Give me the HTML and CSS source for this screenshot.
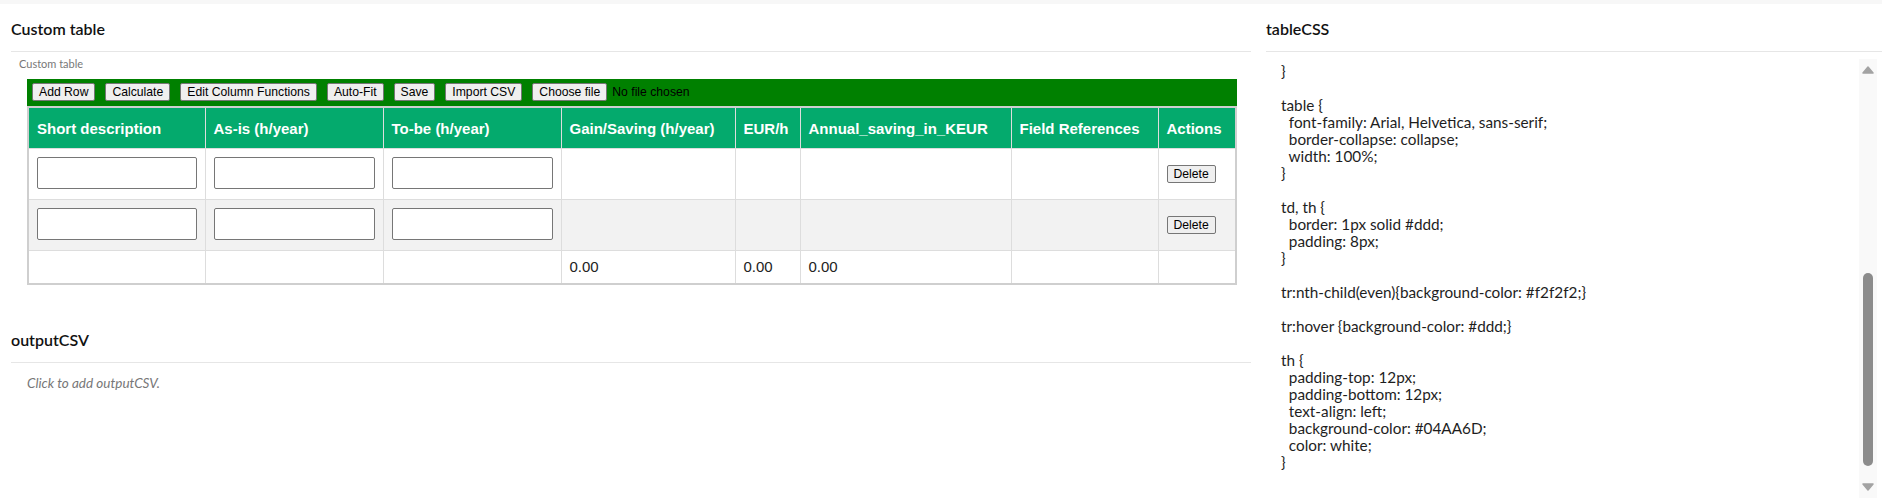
FILE: index.html
```html
<!DOCTYPE html>
<html lang="en">
<head>
    <meta charset="UTF-8">
    <meta name="viewport" content="width=device-width, initial-scale=1.0">
    <title>Custom table</title>
    <link rel="stylesheet" href="styles.css">
</head>
<body>
<div class="page">
    <div class="main">
        <!-- custom table widget -->
        <section class="panel">
            <div class="panel-head"><h2>Custom table</h2></div>
            <div class="widget-label">Custom table</div>
            <div class="widget">
                <div class="toolbar">
                    <button class="btn">Add Row</button>
                    <button class="btn">Calculate</button>
                    <button class="btn">Edit Column Functions</button>
                    <button class="btn">Auto-Fit</button>
                    <button class="btn">Save</button>
                    <button class="btn">Import CSV</button>
                    <span class="file-pick">
                        <button class="btn">Choose file</button>
                        <span>No file chosen</span>
                    </span>
                </div>
                <table class="grid">
                    <colgroup>
                        <col class="c-desc"><col class="c-asis"><col class="c-tobe"><col class="c-gain">
                        <col class="c-eur"><col class="c-annual"><col class="c-ref"><col class="c-act">
                    </colgroup>
                    <thead>
                        <tr>
                            <th>Short description</th>
                            <th>As-is (h/year)</th>
                            <th>To-be (h/year)</th>
                            <th>Gain/Saving (h/year)</th>
                            <th>EUR/h</th>
                            <th>Annual_saving_in_KEUR</th>
                            <th>Field References</th>
                            <th>Actions</th>
                        </tr>
                    </thead>
                    <tbody>
                        <tr>
                            <td><input type="text"></td>
                            <td><input type="text"></td>
                            <td><input type="text"></td>
                            <td></td><td></td><td></td><td></td>
                            <td><button class="btn">Delete</button></td>
                        </tr>
                        <tr>
                            <td><input type="text"></td>
                            <td><input type="text"></td>
                            <td><input type="text"></td>
                            <td></td><td></td><td></td><td></td>
                            <td><button class="btn">Delete</button></td>
                        </tr>
                        <tr>
                            <td></td><td></td><td></td>
                            <td>0.00</td>
                            <td>0.00</td>
                            <td>0.00</td>
                            <td></td><td></td>
                        </tr>
                    </tbody>
                </table>
            </div>
        </section>

        <!-- output -->
        <section class="panel panel-output">
            <div class="panel-head"><h2>outputCSV</h2></div>
            <p class="placeholder">Click to add outputCSV.</p>
        </section>
    </div>

    <aside class="side">
        <div class="panel-head"><h2>tableCSS</h2></div>
        <div class="code-box">
<pre class="code">}

table {
  font-family: Arial, Helvetica, sans-serif;
  border-collapse: collapse;
  width: 100%;
}

td, th {
  border: 1px solid #ddd;
  padding: 8px;
}

tr:nth-child(even){background-color: #f2f2f2;}

tr:hover {background-color: #ddd;}

th {
  padding-top: 12px;
  padding-bottom: 12px;
  text-align: left;
  background-color: #04AA6D;
  color: white;
}</pre>
            <div class="scrollbar">
                <svg class="arrow" width="12" height="8" viewBox="0 0 12 8"><polygon points="1,7 6,1 11,7" fill="#a3a3a3" stroke="#a3a3a3" stroke-width="1.5" stroke-linejoin="round"/></svg>
                <div class="track"><div class="thumb"></div></div>
                <svg class="arrow" width="12" height="8" viewBox="0 0 12 8"><polygon points="1,1 6,7 11,1" fill="#a3a3a3" stroke="#a3a3a3" stroke-width="1.5" stroke-linejoin="round"/></svg>
            </div>
        </div>
    </aside>
</div>
</body>
</html>
```

FILE: styles.css
```css
:root {
    --head-line: #e6e6e6;
    --green-bar: #008000;
    --th-color: #04AA6D;
}
html, body {
    margin: 0;
    background: #fff;
    overflow: hidden;
}
body {
    font-family: Lato, "Open Sans", sans-serif;
    color: #111;
}
.page {
    display: grid;
    grid-template-columns: 1240px 1fr;
    column-gap: 15px;
    padding-left: 11px;
    border-top: 4px solid #f7f7f7;
    height: 498px;
}

/* panel headers */
.panel-head {
    height: 32px;
    padding-top: 15px;
    border-bottom: 1px solid var(--head-line);
}
.panel-head h2 {
    margin: 0;
    font-size: 16px;
    line-height: 20px;
    font-weight: 600;
    color: #111;
}

.widget-label {
    padding: 5px 0 0 8px;
    font-size: 11px;
    line-height: 14px;
    color: #777;
}
.widget {
    margin-top: 8px;
    padding: 0 14px 0 16px;
}

/* toolbar */
.toolbar {
    display: flex;
    align-items: center;
    gap: 10px;
    padding: 4px 5px 5px;
    background-color: var(--green-bar);
    font-family: "Liberation Sans", Arial, sans-serif;
    font-size: 12.2px;
}
.file-pick {
    display: flex;
    align-items: center;
    gap: 5px;
    color: #000;
}
.btn {
    height: 18px;
    padding: 0 6px;
    font-family: "Liberation Sans", Arial, sans-serif;
    font-size: 12.2px;
    line-height: 14px;
    color: #000;
    background-color: #efefef;
    border: 1px solid #767676;
    border-radius: 2px;
}

/* table */
.grid {
    width: 100%;
    table-layout: fixed;
    border-collapse: collapse;
    border: 2px solid #cfcfcf;
    font-family: "Liberation Sans", Arial, sans-serif;
    font-size: 15px;
    color: #222;
}
.c-desc { width: 177px; }
.c-asis { width: 178px; }
.c-tobe { width: 178px; }
.c-gain { width: 174px; }
.c-eur { width: 65px; }
.c-annual { width: 211px; }
.c-ref { width: 147px; }
.c-act { width: 78px; }
.grid th,
.grid td {
    border: 1px solid #ddd;
    padding: 8px;
    text-align: left;
    line-height: 16px;
    white-space: nowrap;
}
.grid th {
    padding-top: 13px;
    padding-bottom: 12px;
    line-height: 15px;
    background-color: var(--th-color);
    color: white;
}
.grid tbody tr:nth-child(even) {
    background-color: #f2f2f2;
}
.grid input {
    display: block;
    box-sizing: border-box;
    width: 100%;
    height: 32px;
    margin: 0 0 2px;
    border: 1px solid #767676;
    border-radius: 2px;
    background: #fff;
}

/* output */
.panel-output {
    margin-top: 30px;
}
.placeholder {
    margin: 11px 0 0 16px;
    font-size: 13.5px;
    line-height: 18px;
    font-style: italic;
    color: #777;
}

/* css side panel */
.code-box {
    display: flex;
    height: 439px;
    margin-top: 7px;
}
.code {
    flex: 1;
    margin: 0;
    padding: 4px 0 0 15px;
    overflow: hidden;
    font-family: Lato, "Open Sans", sans-serif;
    font-size: 15.3px;
    line-height: 17px;
    color: #1e1e1e;
}
.scrollbar {
    display: flex;
    flex-direction: column;
    align-items: center;
    width: 18px;
    margin-right: 5px;
    background-color: #f9f9f9;
}
.arrow {
    margin: 7px 0;
}
.track {
    flex: 1;
    display: flex;
    flex-direction: column;
    width: 100%;
    align-items: center;
}
.thumb {
    width: 10px;
    height: 193px;
    margin-top: auto;
    margin-bottom: 10px;
    border-radius: 5px;
    background-color: #8c8c8c;
}
```
